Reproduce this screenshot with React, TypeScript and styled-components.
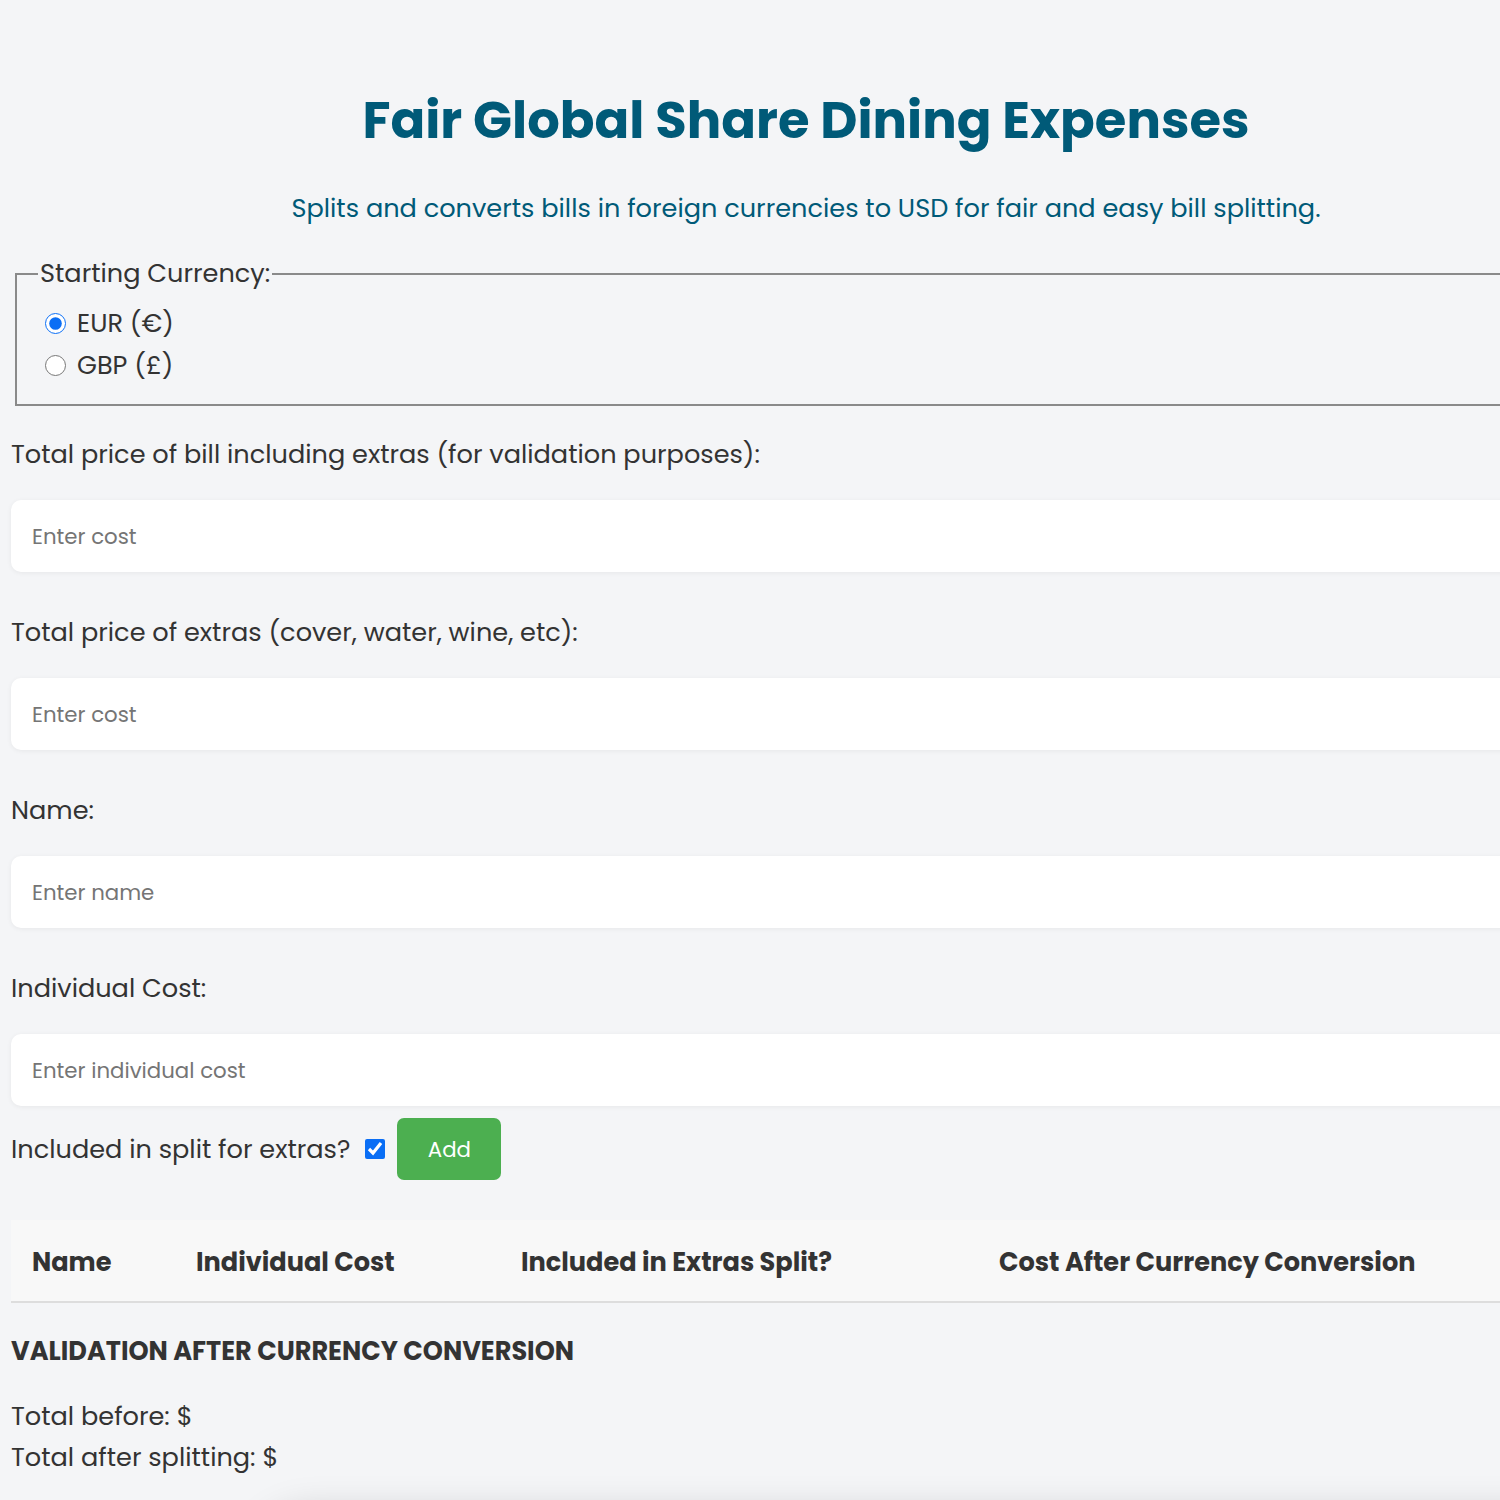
import React from "react";
import styled, { createGlobalStyle } from "styled-components";

const Global = createGlobalStyle`
  html, body { margin: 0; padding: 0; background: #f4f5f7; }
  body { font-family: Poppins, "Open Sans", "DejaVu Sans", sans-serif; color: #333; overflow: hidden; }
  * { box-sizing: border-box; }
`;

const Page = styled.div`
  width: 1590px;
  margin-left: 11px;
  padding-top: 88px;
  display: flex;
  flex-direction: column;
`;

const Title = styled.h1`
  margin: 0;
  text-align: center;
  color: #005a78;
  font-size: 51.2px;
  font-weight: 700;
  line-height: 64px;
`;

const Subtitle = styled.p`
  margin: 38px 0 0;
  text-align: center;
  color: #005a78;
  font-size: 25.6px;
  line-height: 36px;
`;

const Fieldset = styled.fieldset`
  margin: 28px 0 2px 4px;
  padding: 12px 24px 21px 28px;
  border: 2px solid #8a8a8a;
  display: flex;
  flex-direction: column;
  gap: 6px;
`;

const Legend = styled.legend`
  font-size: 25.6px;
  padding: 0 2px;
  margin-left: -7px;
`;

const RadioRow = styled.label`
  display: flex;
  align-items: center;
  gap: 11px;
  font-size: 25.6px;
  line-height: 36px;
`;

const Radio = styled.input.attrs({ type: "radio" })`
  width: 21px;
  height: 21px;
  margin: 0;
  accent-color: #0a6ef5;
`;

const Label = styled.div`
  font-size: 25.6px;
  line-height: 36px;
  margin-top: 28px;
`;

const Input = styled.input`
  margin-top: 28px;
  width: 100%;
  height: 72px;
  border: none;
  border-radius: 10px;
  background: #fff;
  box-shadow: 0 1px 5px rgba(0, 0, 0, 0.06);
  padding: 0 21px;
  font-family: inherit;
  font-size: 21.3px;
  color: #333;
  outline: none;
  &::placeholder { color: #757575; }
`;

const Field = styled.div`
  display: flex;
  flex-direction: column;
  & + & > div { margin-top: 42px; }
`;

const SplitRow = styled.div`
  display: flex;
  align-items: center;
  margin-top: 12px;
  font-size: 25.6px;
`;

const Check = styled.input.attrs({ type: "checkbox" })`
  width: 20px;
  height: 20px;
  margin: 0 12px 0 15px;
  accent-color: #0a6ef5;
`;

const AddButton = styled.button`
  width: 104px;
  height: 62px;
  border: none;
  border-radius: 7px;
  background: #4caf50;
  color: #fff;
  font-family: inherit;
  font-size: 21.3px;
`;

const Table = styled.table`
  margin-top: 40px;
  width: 100%;
  border-collapse: collapse;
  table-layout: fixed;
`;

const Th = styled.th<{ $w?: number }>`
  ${(p) => (p.$w ? `width: ${p.$w}px;` : "")}
  background: #f8f8f8;
  text-align: left;
  font-size: 25.6px;
  font-weight: 700;
  height: 82px;
  padding: 3px 0 0 21px;
  border-bottom: 2px solid #dddddd;
  color: #333;
  white-space: nowrap;
`;

const SectionHead = styled.h3`
  margin: 31px 0 0;
  font-size: 25.6px;
  font-weight: 700;
  text-transform: uppercase;
  line-height: 34px;
`;

const Totals = styled.div`
  margin-top: 30px;
  display: flex;
  flex-direction: column;
  gap: 5px;
  font-size: 25.6px;
  line-height: 36px;
`;

const ShadowCard = styled.div`
  margin: 44px 0 0 240px;
  height: 200px;
  background: #f4f5f7;
  border-radius: 60px;
  box-shadow: 0 -8px 36px rgba(0, 0, 0, 0.17);
`;

export default function App() {
  return (
    <>
      <Global />
      <Page>
        <Title>Fair Global Share Dining Expenses</Title>
        <Subtitle>Splits and converts bills in foreign currencies to USD for fair and easy bill splitting.</Subtitle>
        <Fieldset>
          <Legend>Starting Currency:</Legend>
          <RadioRow>
            <Radio name="cur" defaultChecked /> EUR (€)
          </RadioRow>
          <RadioRow>
            <Radio name="cur" /> GBP (£)
          </RadioRow>
        </Fieldset>
        <Field>
          <Label>Total price of bill including extras (for validation purposes):</Label>
          <Input placeholder="Enter cost" />
        </Field>
        <Field>
          <Label>Total price of extras (cover, water, wine, etc):</Label>
          <Input placeholder="Enter cost" />
        </Field>
        <Field>
          <Label>Name:</Label>
          <Input placeholder="Enter name" />
        </Field>
        <Field>
          <Label>Individual Cost:</Label>
          <Input placeholder="Enter individual cost" />
        </Field>
        <SplitRow>
          Included in split for extras?
          <Check defaultChecked />
          <AddButton>Add</AddButton>
        </SplitRow>
        <Table>
          <thead>
            <tr>
              <Th $w={164}>Name</Th>
              <Th $w={325}>Individual Cost</Th>
              <Th $w={478}>Included in Extras Split?</Th>
              <Th>Cost After Currency Conversion</Th>
            </tr>
          </thead>
        </Table>
        <SectionHead>Validation After Currency Conversion</SectionHead>
        <Totals>
          <div>Total before: $</div>
          <div>Total after splitting: $</div>
        </Totals>
        <ShadowCard />
      </Page>
    </>
  );
}
